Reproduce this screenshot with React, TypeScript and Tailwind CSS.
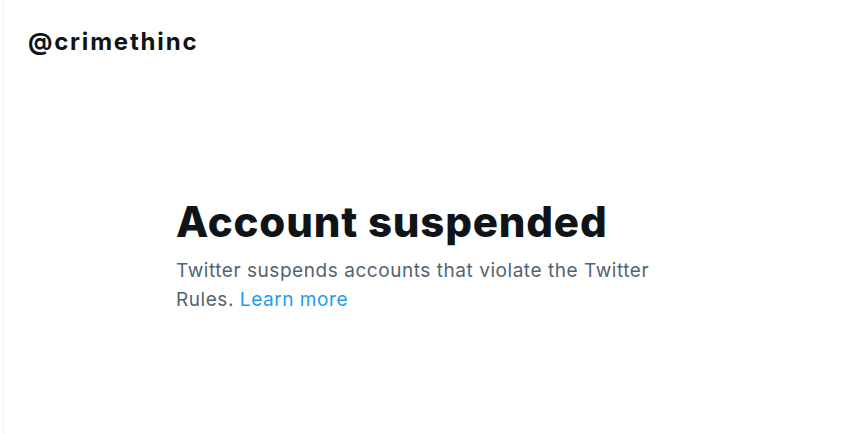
import React from "react";

export default function App() {
  return (
    <div className="w-[866px] h-[434px] bg-white flex overflow-hidden">
      <div className="w-[3px] shrink-0" />
      <div className="w-[1px] shrink-0 bg-[#eff3f4]" />
      <div className="flex-1 flex flex-col font-['Inter',sans-serif]">
        <div className="pl-[24px] pt-[27px]">
          <h2 className="text-[24px] leading-[30px] font-bold text-[#0f1419] tracking-[1.8px]">@crimethinc</h2>
        </div>
        <div className="pl-[172px] pt-[141px]">
          <h1 className="text-[42px] leading-[48px] font-extrabold text-[#0f1419] tracking-[0.8px]">Account suspended</h1>
          <p className="mt-[10px] w-[500px] text-[19px] leading-[29px] text-[#536471] tracking-[0.55px]">
            Twitter suspends accounts that violate the Twitter Rules.{" "}
            <a className="text-[#1d9bf0]" href="#">Learn more</a>
          </p>
        </div>
      </div>
    </div>
  );
}
